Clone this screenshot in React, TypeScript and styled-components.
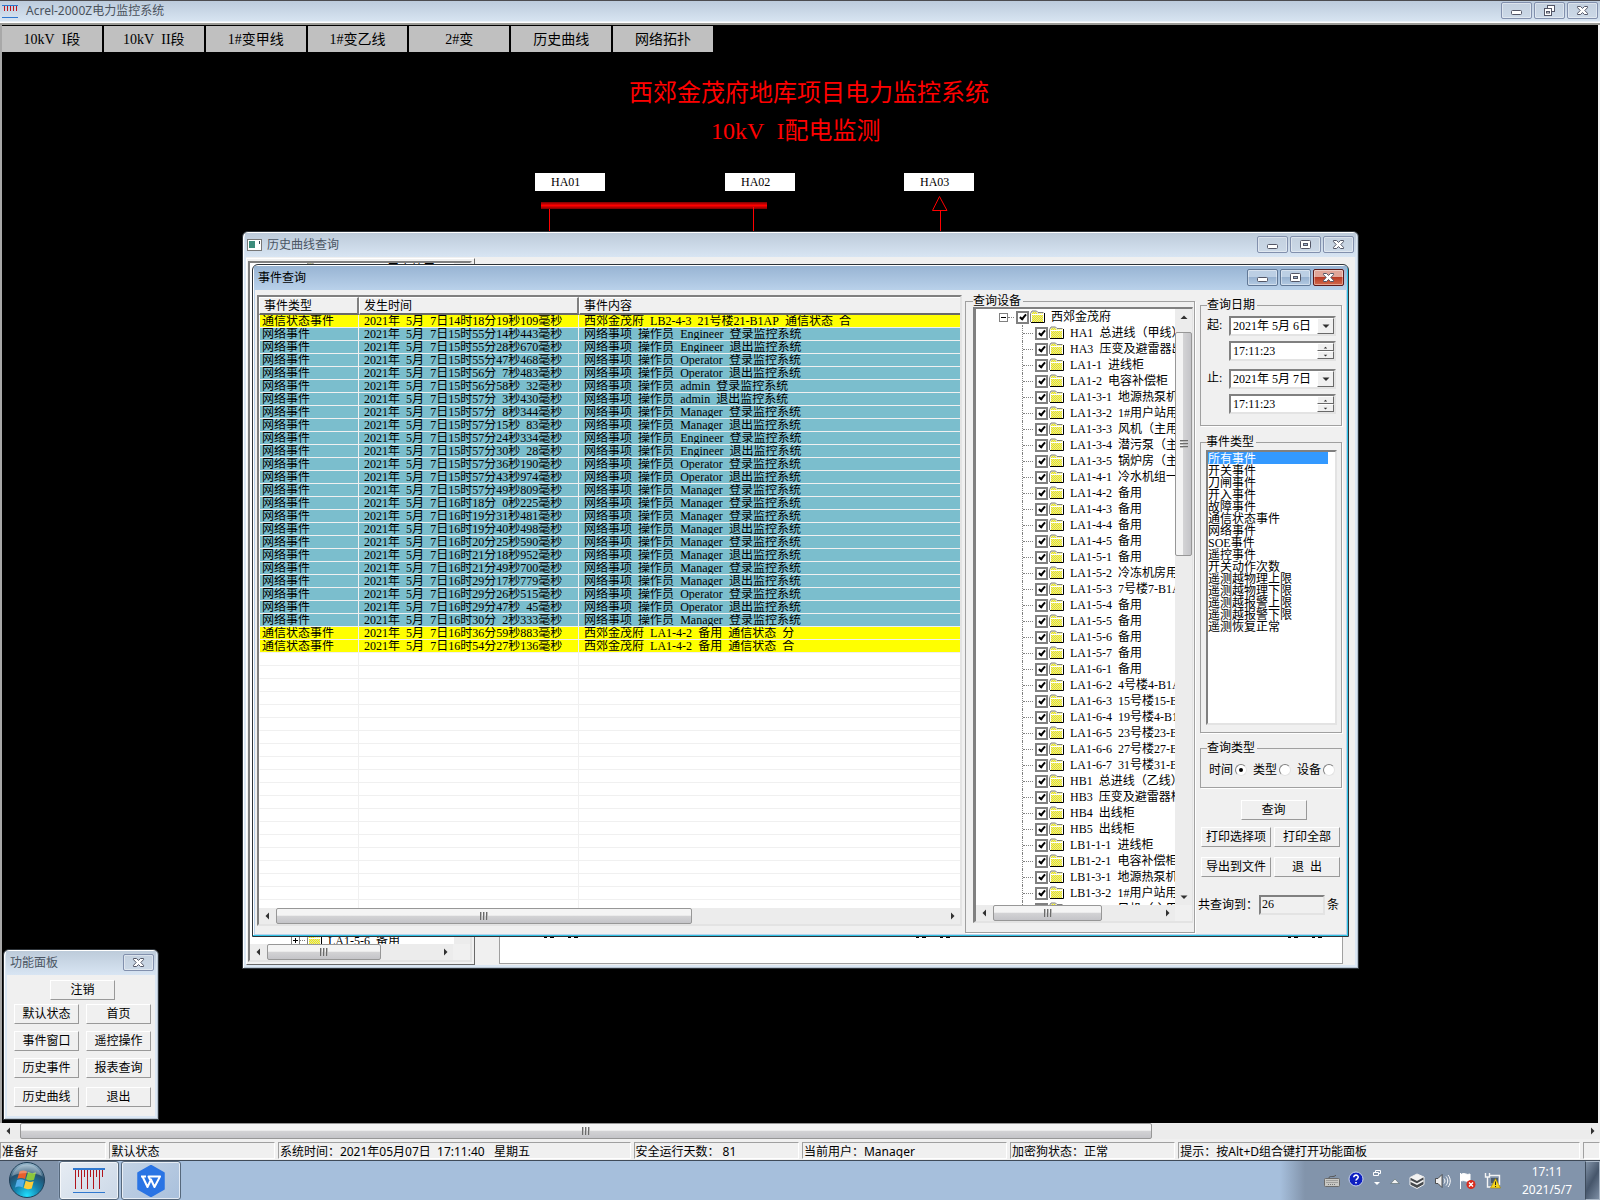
import React from 'react';
import styled, { createGlobalStyle, css } from 'styled-components';

const SONG = '"Liberation Serif", "Noto Sans CJK SC", serif';
const UI = '"Noto Sans", "Noto Sans CJK SC", sans-serif';

const GlobalStyle = createGlobalStyle`
  *, *::before, *::after { box-sizing: border-box; }
  html, body { margin: 0; background: #000; }
  body { font: 12px/12px ${SONG}; color: #000; overflow: hidden; }
  button, input, select { font: inherit; color: inherit; margin: 0; padding: 0; border-radius: 0; }
  ul { list-style: none; margin: 0; padding: 0; }
`;

/* ---------- text ---------- */

const HalfSpace = styled.span`
  font-family: "Liberation Mono", monospace;
  font-size: 0.84em;
  line-height: 0;
  white-space: pre;
`;

function Song({ children }: { children: string }) {
  return (
    <>
      {children.split(/( +)/).map((part, i) =>
        part.startsWith(' ') ? <HalfSpace key={i}>{part}</HalfSpace> : part
      )}
    </>
  );
}

/* ---------- shell ---------- */

const Screen = styled.div`
  display: flex;
  flex-direction: column;
  height: 100vh;
  min-height: 1200px;
`;

const AppBar = styled.header`
  display: flex;
  align-items: center;
  height: 25px;
  padding: 0 2px 2px;
  border-top: 1px solid #4c4c50;
  border-bottom: 2px solid #9b9b97;
  background: linear-gradient(#bccbdc, #d7e4f1 20px, #fff 21px);
`;

const BarTitle = styled.h1`
  flex: 1;
  margin: 0 0 0 8px;
  font: 12px/20px ${UI};
  color: #4a525c;
`;

const Desktop = styled.main`
  position: relative;
  flex: 1;
  border-left: 2px solid #a8a8a8;
  border-right: 2px solid #f0f0f0;
  background: #000;
  overflow: hidden;
`;

const Tabs = styled.nav`
  display: flex;
  gap: 2px;
  width: 711px;
  padding-top: 1px;
`;

const Tab = styled.button`
  flex: 1;
  height: 26px;
  padding-top: 2px;
  border: 0;
  background: #c0c0c0;
  font-size: 14px;
  line-height: 24px;
`;

const Heading = styled.h2<{ $x: number; $y: number }>`
  position: absolute;
  left: ${p => p.$x}px;
  top: ${p => p.$y}px;
  margin: 0;
  font-size: 24px;
  line-height: 24px;
  font-weight: 400;
  color: #f00;
  white-space: nowrap;
`;

const Cabinet = styled.div<{ $x: number }>`
  position: absolute;
  left: ${p => p.$x}px;
  top: 148px;
  width: 70px;
  height: 18px;
  padding-left: 16px;
  background: #fff;
  line-height: 18px;
`;

const Diagram = styled.svg`
  position: absolute;
  left: 530px;
  top: 168px;
`;

/* ---------- windows ---------- */

const Win = styled.section<{ $x: number; $y: number; $w: number; $h: number; $active?: boolean }>`
  position: absolute;
  left: ${p => p.$x}px;
  top: ${p => p.$y}px;
  width: ${p => p.$w}px;
  height: ${p => p.$h}px;
  display: flex;
  flex-direction: column;
  padding: 0 ${p => (p.$active ? 2 : 3)}px ${p => (p.$active ? 2 : 3)}px;
  border: 1px solid #2c3238;
  border-radius: 6px 6px 0 0;
  background: ${p => (p.$active ? '#b9d1ea' : '#dbe7f4')};
  box-shadow: ${p =>
    p.$active ? 'inset -1px -1px 0 #2fc3e4, inset 1px 1px 0 #fff' : 'inset 1px 1px 0 #fff, inset -1px -1px 0 #b8c4d0'};
  overflow: hidden;
`;

const WinBar = styled.header<{ $active?: boolean; $icon?: boolean }>`
  display: flex;
  align-items: center;
  flex: none;
  height: 24px;
  margin: 1px -1px 0;
  padding: 0 ${p => (p.$active ? 3 : 2)}px 0 ${p => (p.$icon ? 2 : 4)}px;
  gap: 5px;
  background: ${p => (p.$active ? 'linear-gradient(#98b4d3, #b9d1ea)' : 'linear-gradient(#bdcbda, #d8e5f3)')};
`;

const WinTitle = styled.h3<{ $active?: boolean }>`
  flex: 1;
  margin: 0;
  font: 12px/20px ${UI};
  color: ${p => (p.$active ? '#000' : '#4a5563')};
`;

const CapGroup = styled.div`
  display: flex;
  gap: 2px;
  padding-bottom: 2px;
`;

const CapButton = styled.button<{ $tone?: 'pale' | 'blue' | 'red' }>`
  display: grid;
  place-items: center;
  width: 31px;
  height: 17px;
  border: 1px solid #8290ad;
  border-radius: 2px;
  box-shadow: inset 0 0 0 1px #ffffff66;
  background: linear-gradient(#c3d0df, #ccd9e7);
  ${p => p.$tone === 'blue' && css`
    border-color: #617896;
    background: linear-gradient(#bccfe4 45%, #98b2d0 50%, #b3cae3);
  `}
  ${p => p.$tone === 'red' && css`
    border-color: #5b1a1a;
    background: linear-gradient(#e0a598 45%, #b93a24 50%, #d26a4c);
  `}
`;

function CapIcon({ kind }: { kind: 'min' | 'max' | 'restore' | 'close' }) {
  const s = { fill: '#fff', stroke: '#535666', strokeWidth: 1 };
  return (
    <svg width="13" height="11" viewBox="0 0 13 11" aria-hidden>
      {kind === 'min' && <rect x="1.5" y="5.5" width="10" height="4" rx="1" {...s} />}
      {kind === 'max' && (
        <>
          <rect x="1.5" y="1.5" width="10" height="8" rx="1" {...s} />
          <rect x="4.5" y="4.5" width="4" height="2" {...s} fill="#9fb4cc" />
        </>
      )}
      {kind === 'restore' && (
        <>
          <rect x="4.5" y="0.5" width="7" height="6" {...s} />
          <rect x="1.5" y="3.5" width="7" height="7" {...s} />
          <rect x="3.5" y="6.5" width="3" height="1.5" {...s} />
        </>
      )}
      {kind === 'close' && (
        <path d="M1.5 1.5h3L6.5 3.4 8.5 1.5h3v1.2L8.8 5.5l2.7 2.8v1.2h-3L6.5 7.6 4.500 9.500h-3V8.300L4.200 5.500 1.500 2.700z" {...s} />
      )}
    </svg>
  );
}

function Caption({ middle = 'max', tone = 'pale' }: { middle?: 'max' | 'restore'; tone?: 'pale' | 'blue' }) {
  return (
    <CapGroup>
      <CapButton $tone={tone} aria-label="最小化"><CapIcon kind="min" /></CapButton>
      <CapButton $tone={tone} aria-label="最大化"><CapIcon kind={middle} /></CapButton>
      <CapButton $tone={tone === 'blue' ? 'red' : 'pale'} aria-label="关闭"><CapIcon kind="close" /></CapButton>
    </CapGroup>
  );
}

const Client = styled.div<{ $pad?: string }>`
  flex: 1;
  display: flex;
  min-height: 0;
  padding: ${p => p.$pad || '0'};
  background: #f0f0f0;
`;

const sunken = css`
  border: 2px solid;
  border-color: #808080 #e3e3e3 #e3e3e3 #808080;
  background: #fff;
`;

const PushButton = styled.button<{ $w?: number }>`
  width: ${p => p.$w || 66}px;
  height: 20px;
  border: 1px solid;
  border-color: #fff #999 #999 #fff;
  background: #f0f0f0;
  line-height: 18px;
  white-space: nowrap;
`;

/* ---------- scroll bars ---------- */

const Bar = styled.div<{ $v?: boolean }>`
  display: flex;
  flex: none;
  flex-direction: ${p => (p.$v ? 'column' : 'row')};
  ${p => (p.$v ? 'width: 17px;' : 'height: 16px;')}
  background: #ececec;
`;

const ArrowButton = styled.button`
  flex: none;
  display: grid;
  place-items: center;
  width: 17px;
  height: 16px;
  border: 0;
  background: none;
`;

const Thumb = styled.div<{ $v?: boolean; $grow: number }>`
  flex: ${p => p.$grow} 0 0;
  display: grid;
  place-items: center;
  border: 1px solid #979797;
  border-radius: 2px;
  background: linear-gradient(${p => (p.$v ? '90deg' : '180deg')}, #f4f4f4 0 45%, #d3d3d5 50%, #c4c4c8);
`;

const Rest = styled.div<{ $grow: number }>`
  flex: ${p => p.$grow} 0 0;
`;

const Grip = styled.i<{ $v?: boolean }>`
  width: 8px;
  height: 8px;
  background: repeating-linear-gradient(${p => (p.$v ? '180deg' : '90deg')}, #6b6b6b 0 1px, #bbb 1px 2px, transparent 2px 3px);
`;

const arrows = { left: 'M6 1.500L2.500 5 6 8.500z', right: 'M4 1.500L7.500 5 4 8.500z', up: 'M1.500 7L5 3.500 8.500 7z', down: 'M1.500 3.500L5 7l3.500-3.500z' };

function Arrow({ dir, size = 10 }: { dir: keyof typeof arrows; size?: number }) {
  return <svg width={size} height={size} viewBox="0 0 10 10" aria-hidden><path d={arrows[dir]} fill="#303030" /></svg>;
}

function ScrollBar({ vertical, lead = 0, thumb, rest }: { vertical?: boolean; lead?: number; thumb: number; rest: number }) {
  return (
    <Bar $v={vertical}>
      <ArrowButton aria-label="向前"><Arrow dir={vertical ? 'up' : 'left'} /></ArrowButton>
      <Rest $grow={lead} />
      <Thumb $v={vertical} $grow={thumb}><Grip $v={vertical} /></Thumb>
      <Rest $grow={rest} />
      <ArrowButton aria-label="向后"><Arrow dir={vertical ? 'down' : 'right'} /></ArrowButton>
    </Bar>
  );
}

/* ---------- event list ---------- */

const ListBox = styled.div`
  flex: 1;
  min-width: 0;
  height: 631px;
  margin-right: 3px;
  display: flex;
  flex-direction: column;
  ${sunken}
`;

const ListBody = styled.div`
  flex: 1;
  min-height: 0;
  overflow: hidden;
`;

const EventTable = styled.table`
  width: 100%;
  table-layout: fixed;
  border-collapse: separate;
  border-spacing: 0;
`;

const Col = styled.col<{ $w?: number }>`
  ${p => p.$w && `width: ${p.$w}px;`}
`;

const Th = styled.th`
  height: 18px;
  padding: 0 0 0 4px;
  border: solid;
  border-width: 1px 2px 2px 1px;
  border-color: #fff #808080 #696969 #fff;
  background: #f0f0f0;
  font-weight: 400;
  text-align: left;
  &:last-child { border-right: 0; }
`;

const fills = { alarm: '#ffff00', net: '#7bbecd', none: '#ffffff' };

const Tr = styled.tr<{ $kind: keyof typeof fills }>`
  background: ${p => fills[p.$kind]};
`;

const Td = styled.td`
  height: 13px;
  padding: 0 0 0 5px;
  border-right: 1px solid #f0f0f0;
  border-bottom: 1px solid #f0f0f0;
  white-space: nowrap;
  overflow: hidden;
  &:first-child { padding-left: 2px; border-left: 1px solid #fff; }
  &:last-child { border-right: 0; }
`;

const LISTING = `14时18分19秒109|西郊金茂府 LB2-4-3 21号楼21-B1AP 通信状态 合
15时55分14秒443|Engineer 登录
15时55分28秒670|Engineer 退出
15时55分47秒468|Operator 登录
15时56分 7秒483|Operator 退出
15时56分58秒 32|admin 登录
15时57分 3秒430|admin 退出
15时57分 8秒344|Manager 登录
15时57分15秒 83|Manager 退出
15时57分24秒334|Engineer 登录
15时57分30秒 28|Engineer 退出
15时57分36秒190|Operator 登录
15时57分43秒974|Operator 退出
15时57分49秒809|Manager 登录
16时18分 0秒225|Manager 登录
16时19分31秒481|Manager 登录
16时19分40秒498|Manager 退出
16时20分25秒590|Manager 登录
16时21分18秒952|Manager 退出
16时21分49秒700|Manager 登录
16时29分17秒779|Manager 退出
16时29分26秒515|Operator 登录
16时29分47秒 45|Operator 退出
16时30分 2秒333|Manager 登录
16时36分59秒883|西郊金茂府 LA1-4-2 备用 通信状态 分
16时54分27秒136|西郊金茂府 LA1-4-2 备用 通信状态 合`;

const events = LISTING.split('\n').map(line => {
  const [time, what] = line.split('|');
  const alarm = what.startsWith('西郊');
  return {
    kind: (alarm ? 'alarm' : 'net') as keyof typeof fills,
    type: alarm ? '通信状态事件' : '网络事件',
    time: `2021年 5月 7日${time}毫秒`,
    text: alarm ? what : `网络事项 操作员 ${what}监控系统`,
  };
});

function EventList() {
  return (
    <ListBox>
      <ListBody>
        <EventTable>
          <colgroup><Col $w={100} /><Col $w={220} /><Col /></colgroup>
          <thead>
            <tr><Th>事件类型</Th><Th>发生时间</Th><Th>事件内容</Th></tr>
          </thead>
          <tbody>
            {events.map((e, i) => (
              <Tr key={i} $kind={e.kind}>
                <Td>{e.type}</Td>
                <Td><Song>{e.time}</Song></Td>
                <Td><Song>{e.text}</Song></Td>
              </Tr>
            ))}
            {Array.from({ length: 20 }, (_, i) => (
              <Tr key={i} $kind="none"><Td /><Td /><Td /></Tr>
            ))}
          </tbody>
        </EventTable>
      </ListBody>
      <ScrollBar thumb={415} rest={252} />
    </ListBox>
  );
}

/* ---------- groups ---------- */

const Group = styled.fieldset<{ $w?: number; $h: number; $pad: string; $gap?: number }>`
  ${p => p.$w && `width: ${p.$w}px;`}
  height: ${p => p.$h}px;
  min-width: 0;
  margin: ${p => p.$gap || 0}px 0 0;
  padding: ${p => p.$pad};
  border: 1px solid #a0a0a0;
  box-shadow: 1px 1px 0 #fff;
`;

const Legend = styled.legend`
  padding: 0 2px 0 0;
`;

/* ---------- device tree ---------- */

const TreeBox = styled.div`
  display: flex;
  flex-direction: column;
  height: 616px;
  ${sunken}
  border-width: 2px 1px 2px 3px;
`;

const TreeView = styled.div`
  flex: 1;
  min-height: 0;
  display: flex;
`;

const TreeBody = styled.div`
  flex: 1;
  min-width: 0;
  overflow: hidden;
`;

const TreeFoot = styled.div`
  display: grid;
  grid-template-columns: 1fr 17px;
  background: #f0f0f0;
`;

const RootRow = styled.div`
  display: flex;
  align-items: center;
  height: 16px;
  padding-left: 23px;
`;

const Branch = styled.ul`
  margin-left: 46px;
`;

const Leaf = styled.li`
  display: flex;
  align-items: center;
  height: 16px;
  border-left: 1px dotted #808080;
`;

const Stub = styled.i<{ $w: number }>`
  flex: none;
  width: ${p => p.$w}px;
  margin-right: 2px;
  border-top: 1px dotted #808080;
`;

const Toggle = styled.button`
  flex: none;
  display: grid;
  place-items: center;
  width: 9px;
  height: 9px;
  border: 1px solid #808080;
  background: #fff;
`;

const TreeLabel = styled.label`
  display: flex;
  align-items: center;
  white-space: nowrap;
`;

const Check = styled.input`
  appearance: none;
  flex: none;
  display: grid;
  place-items: center;
  width: 13px;
  height: 13px;
  margin-right: 1px;
  border: 2px solid #808080;
  background: #fff;
  &:checked::after {
    content: '';
    width: 4px;
    height: 7px;
    margin-top: -2px;
    border: solid #000;
    border-width: 0 2px 2px 0;
    transform: rotate(40deg);
  }
`;

const FolderSvg = styled.svg`
  flex: none;
  margin-right: 6px;
`;

function Sign({ plus }: { plus?: boolean }) {
  return (
    <svg width="7" height="7" viewBox="0 0 7 7" aria-hidden>
      <path d={plus ? 'M1 3.500h5M3.500 1v5' : 'M1 3.500h5'} stroke="#000" />
    </svg>
  );
}

function Folder() {
  return (
    <FolderSvg width="15" height="14" viewBox="0 0 15 14" aria-hidden>
      <defs>
        <pattern id="dither" width="2" height="2" patternUnits="userSpaceOnUse">
          <rect width="2" height="2" fill="#f6f200" />
          <path d="M0 0h1v1H0zM1 1h1v1H1z" fill="#dcdcb4" />
        </pattern>
      </defs>
      <path d="M1.500 12V3.500l1-2h4l1 2h5.500V12z" fill="url(#dither)" />
      <path d="M.5 12V3.500l1.500-2.500h4.500L8 2.500h5.500" fill="none" stroke="#808080" />
      <path d="M1.500 12V4.500h12" fill="none" stroke="#fff" />
      <path d="M1 12.500h13.500V3" fill="none" stroke="#000" />
    </FolderSvg>
  );
}

const devices = [
  'HA1 总进线（甲线）', 'HA3 压变及避雷器出', 'LA1-1 进线柜', 'LA1-2 电容补偿柜', 'LA1-3-1 地源热泵机',
  'LA1-3-2 1#用户站用', 'LA1-3-3 风机（主用', 'LA1-3-4 潜污泵（主', 'LA1-3-5 锅炉房（主', 'LA1-4-1 冷水机组一',
  'LA1-4-2 备用', 'LA1-4-3 备用', 'LA1-4-4 备用', 'LA1-4-5 备用', 'LA1-5-1 备用', 'LA1-5-2 冷冻机房用',
  'LA1-5-3 7号楼7-B1A', 'LA1-5-4 备用', 'LA1-5-5 备用', 'LA1-5-6 备用', 'LA1-5-7 备用', 'LA1-6-1 备用',
  'LA1-6-2 4号楼4-B1A', 'LA1-6-3 15号楼15-B', 'LA1-6-4 19号楼4-B1', 'LA1-6-5 23号楼23-B', 'LA1-6-6 27号楼27-B',
  'LA1-6-7 31号楼31-B', 'HB1 总进线（乙线）', 'HB3 压变及避雷器柜', 'HB4 出线柜', 'HB5 出线柜', 'LB1-1-1 进线柜',
  'LB1-2-1 电容补偿柜', 'LB1-3-1 地源热泵机', 'LB1-3-2 1#用户站用', 'LB1-3-3 风机（主用',
];

function DeviceTree() {
  return (
    <Group $w={230} $h={638} $pad="0 1px 0 7px">
      <Legend>查询设备</Legend>
      <TreeBox>
        <TreeView>
          <TreeBody>
            <RootRow>
              <Toggle aria-label="折叠"><Sign /></Toggle>
              <Stub $w={6} />
              <TreeLabel><Check type="checkbox" defaultChecked /><Folder />西郊金茂府</TreeLabel>
            </RootRow>
            <Branch>
              {devices.map(name => (
                <Leaf key={name}>
                  <Stub $w={10} />
                  <TreeLabel>
                    <Check type="checkbox" defaultChecked />
                    <Folder />
                    <span><Song>{name}</Song></span>
                  </TreeLabel>
                </Leaf>
              ))}
            </Branch>
          </TreeBody>
          <ScrollBar vertical lead={7} thumb={222} rest={333} />
        </TreeView>
        <TreeFoot><ScrollBar thumb={108} rest={56} /><span /></TreeFoot>
      </TreeBox>
    </Group>
  );
}

/* ---------- query form ---------- */

const Side = styled.form`
  display: flex;
  flex-direction: column;
  width: 142px;
  margin-left: 5px;
  padding-top: 4px;
`;

const DateBlock = styled.div`
  display: grid;
  grid-template-columns: 22px minmax(0, 1fr);
  row-gap: 5px;
  margin-bottom: 8px;
`;

const DateLabel = styled.label`
  line-height: 18px;
`;

const Field = styled.div`
  grid-column: 2;
  display: flex;
  min-width: 0;
  height: 20px;
  ${sunken}
`;

const DateSelect = styled.select`
  appearance: none;
  flex: 1;
  min-width: 0;
  padding-left: 2px;
  border: 0;
  background: none;
  line-height: 14px;
`;

const TimeInput = styled.input`
  flex: 1;
  width: 0;
  min-width: 0;
  padding-left: 2px;
  border: 0;
  background: none;
`;

const raised = css`
  display: grid;
  place-items: center;
  border: 1px solid;
  border-color: #fff #696969 #696969 #fff;
  background: #f0f0f0;
`;

const DropMark = styled.span`
  flex: none;
  width: 17px;
  ${raised}
`;

const Spin = styled.div`
  flex: none;
  display: grid;
  grid-template-rows: 8px 8px;
  width: 17px;
`;

const SpinButton = styled.button`
  ${raised}
`;

function DateFields({ id, label, day }: { id: string; label: string; day: string }) {
  return (
    <DateBlock>
      <DateLabel htmlFor={id}>{label}</DateLabel>
      <Field>
        <DateSelect id={id}><option>{day}</option></DateSelect>
        <DropMark><Arrow dir="down" /></DropMark>
      </Field>
      <Field>
        <TimeInput aria-label={`${label}时间`} defaultValue="17:11:23" />
        <Spin>
          <SpinButton type="button" aria-label="增加"><Arrow dir="up" size={5} /></SpinButton>
          <SpinButton type="button" aria-label="减少"><Arrow dir="down" size={5} /></SpinButton>
        </Spin>
      </Field>
    </DateBlock>
  );
}

const TypeList = styled.select`
  display: block;
  width: 131px;
  height: 275px;
  padding: 0 7px 0 0;
  overflow: hidden;
  outline: 0;
  ${sunken}
  option {
    display: flex;
    align-items: center;
    height: 12px;
    min-height: 12px;
    padding: 0;
    overflow: visible;
  }
  option:checked {
    background: linear-gradient(#3399ff, #3399ff);
    -webkit-text-fill-color: #fff;
  }
`;

const types = [
  '所有事件', '开关事件', '刀闸事件', '开入事件', '故障事件', '通信状态事件', '网络事件', 'SOE事件', '遥控事件',
  '开关动作次数', '遥测越物理上限', '遥测越物理下限', '遥测越报警上限', '遥测越报警下限', '遥测恢复正常',
];

const Radios = styled.div`
  display: flex;
  justify-content: space-between;
  padding-left: 2px;
`;

const RadioLabel = styled.label`
  display: flex;
  align-items: center;
  gap: 2px;
`;

const Radio = styled.input`
  appearance: none;
  display: grid;
  place-items: center;
  width: 12px;
  height: 12px;
  border: 1px solid;
  border-color: #808080 #e3e3e3 #e3e3e3 #808080;
  border-radius: 50%;
  background: #fff;
  &:checked::after {
    content: '';
    width: 4px;
    height: 4px;
    border-radius: 50%;
    background: #000;
  }
`;

const Actions = styled.div`
  display: grid;
  grid-template-columns: 70px 66px;
  justify-content: space-between;
  gap: 10px 0;
  margin: 12px 2px 0 1px;
`;

const MainAction = styled.div`
  grid-column: 1 / -1;
  justify-self: center;
  margin: 0 0 -3px 6px;
`;

const CountRow = styled.div`
  display: flex;
  align-items: center;
  margin: 18px 0 0 -2px;
`;

const CountInput = styled.input`
  width: 66px;
  height: 20px;
  margin: 0 2px 0 1px;
  padding: 0 0 2px 1px;
  ${sunken}
  background: #f0f0f0;
`;

function QueryForm() {
  return (
    <Side onSubmit={e => e.preventDefault()}>
      <Group $h={127} $pad="5px 5px 0 6px">
        <Legend>查询日期</Legend>
        <DateFields id="from" label="起:" day="2021年 5月 6日" />
        <DateFields id="to" label="止:" day="2021年 5月 7日" />
      </Group>
      <Group $h={297} $pad="2px 0 0 5px" $gap={10}>
        <Legend>事件类型</Legend>
        <TypeList size={15} defaultValue="所有事件" aria-label="事件类型">
          {types.map(t => <option key={t}>{t}</option>)}
        </TypeList>
      </Group>
      <Group $h={46} $pad="10px 6px 0 6px" $gap={9}>
        <Legend>查询类型</Legend>
        <Radios>
          {['时间', '类型', '设备'].map((t, i) => (
            <RadioLabel key={t}>{t}<Radio type="radio" name="by" defaultChecked={i === 0} /></RadioLabel>
          ))}
        </Radios>
      </Group>
      <Actions>
        <MainAction><PushButton type="button">查询</PushButton></MainAction>
        <PushButton type="button" $w={70}>打印选择项</PushButton>
        <PushButton type="button">打印全部</PushButton>
        <PushButton type="button" $w={70}>导出到文件</PushButton>
        <PushButton type="button"><Song>退 出</Song></PushButton>
      </Actions>
      <CountRow>
        <label htmlFor="count">共查询到：</label>
        <CountInput id="count" defaultValue="26" />
        条
      </CountRow>
    </Side>
  );
}

/* ---------- history window ---------- */

const HistoryPanel = styled.div`
  display: flex;
  width: 229px;
  margin-top: 1px;
  padding: 2px 2px 2px 1px;
  border: 1px solid;
  border-color: #fff #696969 #696969 #fff;
`;

const HistoryTree = styled.div`
  flex: 1;
  display: flex;
  flex-direction: column;
  ${sunken}
`;

const HistoryRows = styled.ul`
  flex: 1;
  display: flex;
  flex-direction: column;
  justify-content: space-between;
  min-height: 0;
  padding-left: 41px;
  border-right: 16px solid #ececec;
  overflow: hidden;
`;

const HistoryRow = styled.li`
  display: flex;
  align-items: center;
  height: 15px;
  white-space: nowrap;
  &:first-child { margin-top: -2px; }
  &:last-child { margin-bottom: -4px; }
`;

const ChartBox = styled.div`
  flex: 1;
  display: flex;
  justify-content: space-between;
  align-items: flex-end;
  margin: 40px 12px 1px 24px;
  padding: 0 20px 24px 44px;
  border: 1px solid #a0a0a0;
  background: #fff;
`;

function AxisMark() {
  return <svg width="34" height="3" aria-hidden><path d="M0 1.500h3M6 1.500h4M24 1.500h3M30 1.500h4" stroke="#000" strokeWidth="1" /></svg>;
}

function AppGlyph() {
  return (
    <svg width="15" height="12" viewBox="0 0 15 12" aria-hidden>
      <rect x=".5" y=".5" width="14" height="11" fill="#fff" stroke="#777" />
      <rect x="2" y="2" width="6" height="7" fill="#3c8c7c" />
      <path d="M12.500 2v3" stroke="#345" />
    </svg>
  );
}

/* ---------- function panel ---------- */

const PanelGrid = styled.div`
  flex: 1;
  display: grid;
  grid-template-columns: 65px 65px;
  grid-auto-rows: min-content;
  align-content: start;
  gap: 7px;
  padding: 5px 0 0 7px;
  > button:nth-last-of-type(-n + 2) { margin-top: 2px; }
`;

const Logout = styled.div`
  grid-column: 1 / -1;
  justify-self: center;
  height: 17px;
`;

/* ---------- status bar / taskbar ---------- */

const Status = styled.footer`
  display: flex;
  gap: 3px;
  height: 21px;
  padding: 3px 0 1px;
  background: #f0f0f0;
  font: 12px/17px ${UI};
`;

const Cell = styled.div<{ $grow: number }>`
  flex: ${p => p.$grow} 0 0;
  min-width: 0;
  padding-left: 1px;
  border: 1px solid;
  border-color: #a0a0a0 #fff #fff #a0a0a0;
  white-space: pre;
  overflow: hidden;
`;

const Taskbar = styled.footer`
  display: flex;
  align-items: stretch;
  height: 40px;
  border-top: 1px solid #3f4a58;
  background: linear-gradient(90deg, #8294ab 0 58px, #a6bfdc 60px, #a6bfdc calc(100% - 320px), #8294ab calc(100% - 295px));
`;

const StartButton = styled.button`
  width: 59px;
  border: 0;
  padding: 0 5px 0 0;
  background: none;
`;

const TaskButton = styled.button<{ $on?: boolean }>`
  display: grid;
  place-items: center;
  width: 60px;
  margin-right: 2px;
  border: 1px solid #56687c;
  border-radius: 3px;
  box-shadow: inset 0 0 0 1px #ffffffaa;
  background: ${p => (p.$on ? 'linear-gradient(135deg, #e6ecf3, #cbd8e7)' : 'linear-gradient(135deg, #c3d3e5, #a9c0dc)')};
`;

const Tray = styled.div`
  display: flex;
  align-items: center;
  gap: 8px;
  margin-left: auto;
`;

const Clock = styled.time`
  width: 76px;
  font: 12px/18px ${UI};
  color: #fff;
  text-align: center;
`;

const ShowDesktop = styled.button`
  width: 15px;
  border: 1px solid #a8b6c6;
  border-left-color: #3e4c5c;
  background: linear-gradient(120deg, #8293a8, #46566b 50%, #7d8ea4);
`;

function Bars({ w, h }: { w: number; h: number }) {
  return (
    <svg width={w} height={h} viewBox="0 0 32 25" preserveAspectRatio="none" aria-hidden>
      <path d="M0 1h32" stroke="#2f78cf" strokeWidth="2" />
      <path d="M0 24.500h32" stroke="#2f78cf" />
      <path d="M2.500 2v19M8.500 2v19M14.500 2v19M20.500 2v19M26.500 2v19" stroke="#b0141c" />
      <path d="M5.500 2v7M11.500 2v7M17.500 2v7M23.500 2v7M29.500 2v7" stroke="#b0141c" />
    </svg>
  );
}

function TitleBars() {
  return (
    <svg width="16" height="13" viewBox="0 0 16 13" aria-hidden>
      <path d="M0 .5h16M0 12.500h16" stroke="#2f78cf" />
      <path d="M2.500 1v5M5.500 1v5M8.500 1v5M11.500 1v5M14.500 1v5" stroke="#c0141c" />
    </svg>
  );
}

function StartOrb() {
  return (
    <svg width="38" height="38" viewBox="0 0 38 38" aria-hidden>
      <defs>
        <radialGradient id="orb" cx="50%" cy="95%" r="90%">
          <stop offset="0" stopColor="#20e0ff" /><stop offset=".4" stopColor="#1583ad" /><stop offset=".75" stopColor="#24506f" /><stop offset="1" stopColor="#8fb0c6" />
        </radialGradient>
      </defs>
      <circle cx="19" cy="19" r="17.500" fill="url(#orb)" stroke="#1f3f58" />
      <path d="M11.500 10.500c3-1.500 5-1.300 7.500 0l-2 7.500c-2.500-1.300-5-1.300-7.700-.2z" fill="#e8602c" />
      <path d="M20 11c3 1.500 5.300 1.400 8 .3l-2 7.500c-3 1.200-5.200 1-8-.5z" fill="#8cc63c" />
      <path d="M9 19c2.800-1.200 5.200-1 7.600.2l-2 7.300c-2.500-1.300-4.800-1.200-7.600-.1z" fill="#55aee8" />
      <path d="M17.700 19.800c2.800 1.400 5 1.500 8 .4l-2 7.300c-2.800 1-5.300 1-8-.4z" fill="#fccc38" />
      <path d="M4 15a15.500 15.500 0 0 1 30 0c-8-4-22-4-30 0z" fill="#fff" opacity=".28" />
    </svg>
  );
}

function Wps() {
  return (
    <svg width="30" height="32" viewBox="0 0 30 32" aria-hidden>
      <path d="M15 0.500L28 8v16L15 31.500 2 24V8z" fill="#2a74e4" stroke="#2a74e4" strokeWidth="1.500" strokeLinejoin="round" />
      <path d="M5 11.500h5M6.500 11.500L11.500 22 15 14.500 18.500 22l5.500-10.500H12.500l2.500 5" fill="none" stroke="#fff" strokeWidth="2" strokeLinejoin="round" />
    </svg>
  );
}

function TrayIcons() {
  return (
    <>
      <svg width="16" height="14" viewBox="0 0 16 14" aria-hidden>
        <path d="M5 4c0-3 5 0 7-3" fill="none" stroke="#555" />
        <rect x=".5" y="4.500" width="15" height="8" rx="1" fill="#c8c8c4" stroke="#6b6b6b" />
        <path d="M2.500 6.500h11M2.500 8.500h11M4 10.500h8" stroke="#777" strokeDasharray="1 1" />
      </svg>
      <svg width="16" height="20" viewBox="0 0 16 20" aria-hidden>
        <circle cx="8" cy="8" r="7" fill="#0d1fc0" stroke="#c6d2ec" />
        <path d="M5.800 6.300c0-3 4.600-2.700 4.400 0C10.100 7.800 8 7.800 8 9.600M8 11v1.600" fill="none" stroke="#fff" strokeWidth="1.600" />
      </svg>
      <svg width="10" height="24" viewBox="0 0 10 24" aria-hidden>
        <path d="M3.500 3V1.500h5v3H7M1.500 3.500h5v3h-5z" fill="none" stroke="#fff" />
        <path d="M2 13h6l-3 3z" fill="#fff" />
      </svg>
      <svg width="10" height="8" viewBox="0 0 10 8" aria-hidden><path d="M.8 6.500L5 2l4.200 4.500z" fill="#f4f4f4" stroke="#566" strokeWidth=".6" /></svg>
      <svg width="18" height="18" viewBox="-1 0 18 18" aria-hidden>
        <path d="M1 5.500L8 2l7 3v7.500L8 16.500 1 13z" fill="#45494d" stroke="#f2f2f2" />
        <path d="M1 5.500L8 2l7 3-7 4z" fill="#f2f2f2" />
        <path d="M1.500 9L8 12.200 14.500 8.500" fill="none" stroke="#f2f2f2" strokeWidth="1.500" />
      </svg>
      <svg width="17" height="16" viewBox="0 0 17 16" aria-hidden>
        <path d="M1.500 5.500H4l4-4v13l-4-4H1.500z" fill="#eee" stroke="#333" strokeWidth=".8" />
        <path d="M10 5.500c1.300 1.500 1.300 3.500 0 5M12 3.500c2.300 2.700 2.300 6.300 0 9M14 2c3 3.600 3 8.400 0 12" fill="none" stroke="#fff" />
      </svg>
      <svg width="17" height="18" viewBox="0 0 17 18" aria-hidden>
        <path d="M1.500 1v16M2.500 2c4-1.500 5 1.500 8.500 0v7c-4 1.500-5-1.500-8.500 0z" fill="#fff" stroke="#fff" />
        <circle cx="12" cy="12.500" r="4.500" fill="#d92a1c" />
        <path d="M10 10.500l4 4M14 10.500l-4 4" stroke="#fff" strokeWidth="1.400" />
      </svg>
      <svg width="17" height="17" viewBox="0 0 17 17" aria-hidden>
        <path d="M1.500 1v4h4V1M3.500 5v10h5M6 3.500h9.500v9H9" fill="none" stroke="#f4f4f4" strokeWidth="1.400" />
        <path d="M7 6h7v5H7z" fill="#4a5a6c" />
        <path d="M11.500 6.500L16.500 16h-10z" fill="#f6d61c" stroke="#a08000" strokeWidth=".6" />
        <path d="M11.500 9.500v3.500M11.500 14v1" stroke="#222" />
      </svg>
    </>
  );
}

const statusCells: [string, number][] = [
  ['准备好', 105], ['默认状态', 165], ['系统时间：2021年05月07日  17:11:40   星期五', 355],
  ['安全运行天数： 81', 165], ['当前用户：Manager', 205], ['加密狗状态：正常', 165],
  ['提示：按Alt+D组合键打开功能面板', 405], ['', 14],
];

export default function App() {
  return (
    <Screen>
      <GlobalStyle />
      <AppBar>
        <TitleBars />
        <BarTitle>Acrel-2000Z电力监控系统</BarTitle>
        <Caption middle="restore" />
      </AppBar>

      <Desktop>
        <Tabs>
          {['10kV I段', '10kV II段', '1#变甲线', '1#变乙线', '2#变', '历史曲线', '网络拓扑'].map(t => (
            <Tab key={t}><Song>{t}</Song></Tab>
          ))}
        </Tabs>

        <Heading $x={627} $y={56}>西郊金茂府地库项目电力监控系统</Heading>
        <Heading $x={709} $y={94}><Song>10kV I配电监测</Song></Heading>
        <Cabinet $x={533}>HA01</Cabinet>
        <Cabinet $x={723}>HA02</Cabinet>
        <Cabinet $x={902}>HA03</Cabinet>
        <Diagram width="430" height="40" aria-hidden>
          <defs>
            <linearGradient id="bus" x1="0" y1="0" x2="0" y2="1">
              <stop offset="0" stopColor="#700" /><stop offset=".5" stopColor="#f00" /><stop offset="1" stopColor="#700" />
            </linearGradient>
          </defs>
          <rect x="9" y="9" width="226" height="7" fill="url(#bus)" />
          <path d="M17.500 16v24M221.500 14v26M408.500 17.500v22M400.500 17.500h14.500l-7.500-14z" fill="none" stroke="#f00" />
        </Diagram>

        <Win $x={240} $y={206} $w={1117} $h={738}>
          <WinBar $icon><AppGlyph /><WinTitle>历史曲线查询</WinTitle><Caption /></WinBar>
          <Client>
            <HistoryPanel>
              <HistoryTree>
                <HistoryRows>
                  <HistoryRow><Stub $w={13} /><Folder /><span><Song>LA1-3-2 1#用户站用</Song></span></HistoryRow>
                  <HistoryRow><Toggle aria-label="展开"><Sign plus /></Toggle><Stub $w={5} /><Folder /><span><Song>LA1-5-6 备用</Song></span></HistoryRow>
                </HistoryRows>
                <TreeFoot><ScrollBar thumb={113} rest={56} /><span /></TreeFoot>
              </HistoryTree>
            </HistoryPanel>
            <ChartBox><AxisMark /><AxisMark /><AxisMark /></ChartBox>
          </Client>
        </Win>

        <Win $x={250} $y={239} $w={1097} $h={673} $active>
          <WinBar $active><WinTitle $active>事件查询</WinTitle><Caption tone="blue" /></WinBar>
          <Client $pad="5px 4px 0 2px">
            <EventList />
            <DeviceTree />
            <QueryForm />
          </Client>
        </Win>

        <Win $x={1} $y={924} $w={156} $h={171}>
          <WinBar>
            <WinTitle>功能面板</WinTitle>
            <CapGroup><CapButton aria-label="关闭"><CapIcon kind="close" /></CapButton></CapGroup>
          </WinBar>
          <Client>
            <PanelGrid>
              <Logout><PushButton $w={65}>注销</PushButton></Logout>
              {['默认状态', '首页', '事件窗口', '遥控操作', '历史事件', '报表查询', '历史曲线', '退出'].map(t => (
                <PushButton key={t} $w={65}>{t}</PushButton>
              ))}
            </PanelGrid>
          </Client>
        </Win>
      </Desktop>

      <ScrollBar lead={3} thumb={1131} rest={431} />
      <Status>
        {statusCells.map(([text, grow], i) => <Cell key={i} $grow={grow}>{text}</Cell>)}
      </Status>
      <Taskbar>
        <StartButton aria-label="开始"><StartOrb /></StartButton>
        <TaskButton $on aria-label="Acrel-2000Z"><Bars w={32} h={25} /></TaskButton>
        <TaskButton aria-label="WPS"><Wps /></TaskButton>
        <Tray>
          <TrayIcons />
          <Clock>17:11<br />2021/5/7</Clock>
        </Tray>
        <ShowDesktop aria-label="显示桌面" />
      </Taskbar>
    </Screen>
  );
}
